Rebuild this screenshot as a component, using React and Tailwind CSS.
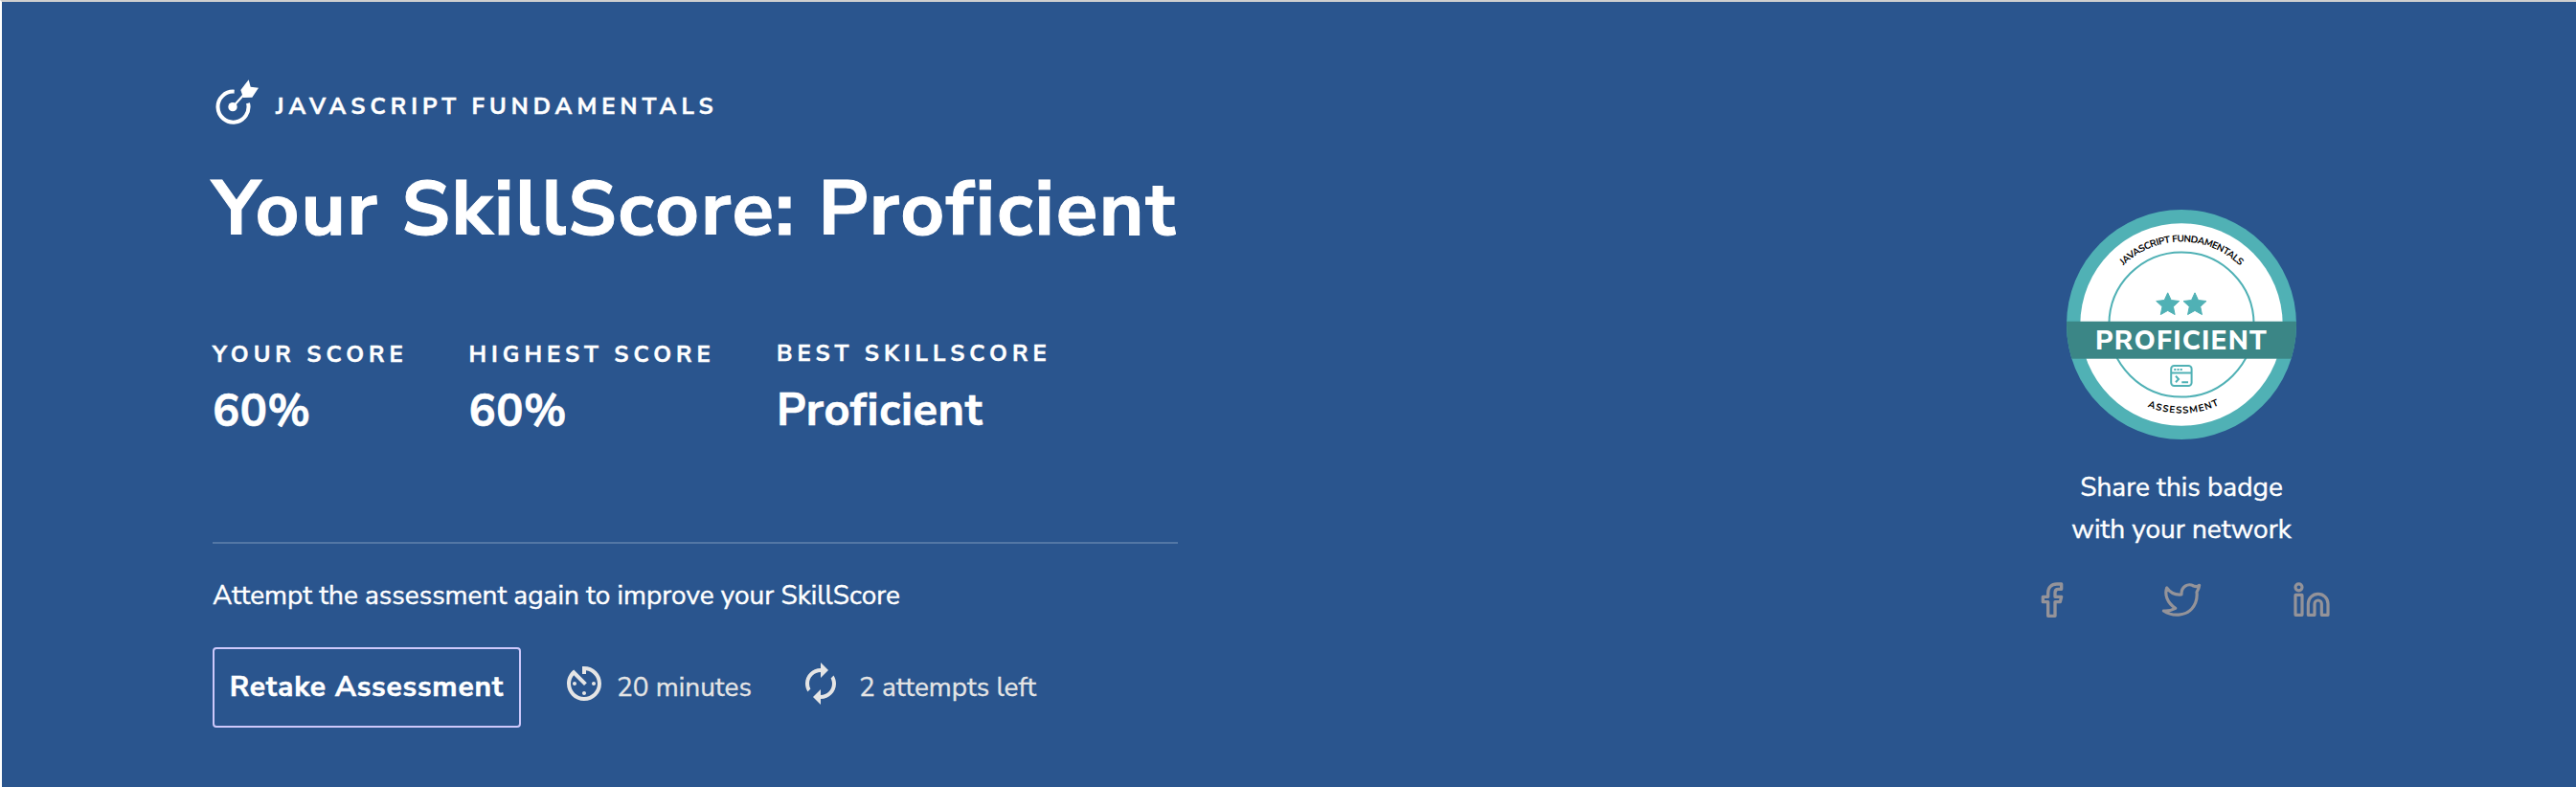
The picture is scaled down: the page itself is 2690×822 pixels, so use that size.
import React from "react";
import { MdAvTimer, MdAutorenew } from "react-icons/md";

function TargetIcon() {
  return (
    <svg className="h-12 w-12 shrink-0" viewBox="36 39 144 144" fill="none">
      <path d="M104 77A48 48 0 1 0 147 113" stroke="#fff" strokeWidth="12" />
      <circle cx="99" cy="125" r="14" fill="#fff" />
      <path d="M99 125L137 83" stroke="#fff" strokeWidth="6.5" />
      <path d="M149 40L155 62L180 65L160 95L132 96L124 72Z" fill="#fff" />
    </svg>
  );
}

function Star({ x }) {
  const pts = Array.from({ length: 10 }, (_, i) => {
    const r = i % 2 ? 6 : 12.6;
    const a = (Math.PI / 5) * i - Math.PI / 2;
    return `${(x + r * Math.cos(a)).toFixed(2)},${(99.4 + r * Math.sin(a)).toFixed(2)}`;
  }).join(" ");
  return <polygon points={pts} fill="#50b1b5" stroke="#50b1b5" strokeWidth="1" strokeLinejoin="round" />;
}

function Badge() {
  return (
    <svg className="h-60 w-60" viewBox="0 0 240 240">
      <defs>
        <clipPath id="disc"><circle cx="120" cy="120" r="120" /></clipPath>
        <path id="arcTop" d="M33.5 120A86.5 86.5 0 0 1 206.5 120" />
        <path id="arcBottom" d="M27.3 120A92.7 92.7 0 0 0 212.7 120" />
      </defs>
      <circle cx="120" cy="120" r="120" fill="#50b1b5" />
      <circle cx="120" cy="120" r="105.7" fill="#fff" />
      <circle cx="120" cy="120" r="75.6" fill="none" stroke="#50b1b5" strokeWidth="2" />
      <rect x="0" y="116.7" width="240" height="39" fill="#3b8686" clipPath="url(#disc)" />
      <Star x={105.7} />
      <Star x={134} />
      <g fill="none" stroke="#50b1b5" strokeWidth="2">
        <rect x="109.2" y="163" width="21.4" height="21" rx="3.2" />
        <path d="M109.2 170.5H130.6M120.3 180.2H127M114 173.8L117 177L114 180.2" />
        <path d="M112.3 167H120.7" strokeDasharray="2 1.2" />
      </g>
      <text x="120" y="146" textAnchor="middle" fill="#fff" className="text-[28px] font-extrabold tracking-[1.25px]">PROFICIENT</text>
      <text fill="#000" className="text-[10px] font-bold tracking-[-0.45px]"><textPath href="#arcTop" startOffset="50%" textAnchor="middle">JAVASCRIPT FUNDAMENTALS</textPath></text>
      <text fill="#000" className="text-[10px] font-bold tracking-[1.1px]"><textPath href="#arcBottom" startOffset="50.9%" textAnchor="middle">ASSESSMENT</textPath></text>
    </svg>
  );
}

function FacebookIcon() {
  return (
    <svg className="h-[50px] w-[50px]" viewBox="0 0 150 150" fill="none" stroke="#949399" strokeWidth="10" strokeLinejoin="round">
      <path d="M98 30H84C66 30 56 42 56 58V70H40V86H56V130H78V86H94L98 70H78V57C78 50 82 46 88 46H98Z" />
    </svg>
  );
}

function TwitterIcon() {
  return (
    <svg className="ml-[80px] h-[50px] w-14" viewBox="0 0 168 150" fill="none" stroke="#949399" strokeWidth="9.5" strokeLinejoin="round">
      <path d="M140 34C135 38 127 38 122 36C104 26 83 38 84 63C64 65 48 56 38 42C31 62 38 88 65 106C54 112 42 115 28 114C56 133 96 130 116 108C130 92 134 74 132 55C136 49 139 43 140 34Z" />
    </svg>
  );
}

function LinkedinIcon() {
  return (
    <svg className="ml-[82px] h-[50px] w-[50px]" viewBox="0 0 150 150" fill="none" stroke="#949399" strokeWidth="9.5" strokeLinejoin="round">
      <circle cx="37.5" cy="40" r="10.5" />
      <rect x="27" y="64" width="21" height="63" rx="1" />
      <path d="M67 127V92A31 31 0 0 1 129 92V127H109V92A11 11 0 0 0 87 92V127Z" />
    </svg>
  );
}

function Stat({ label, value, className }) {
  return (
    <div className={className}>
      <div className="text-[24px] leading-[32px] font-bold tracking-[5px] whitespace-nowrap">{label}</div>
      <div className="mt-3 h-[63px] text-[47px] leading-[64px] font-bold tracking-[0.6px] [-webkit-text-stroke:0.6px]">{value}</div>
    </div>
  );
}

export default function App() {
  return (
    <div className="flex h-[822px] w-full justify-between overflow-hidden border-t-2 border-l-2 border-t-[#cfcfcf] border-l-white bg-[#2a558e] pr-[232px] pl-[220px] font-['Nunito_Sans','Nunito','Lato',sans-serif] text-white">
      <main className="w-[1008px] pt-[81px] [-webkit-text-stroke:0.4px]">
        <div className="flex h-12 items-center">
          <TargetIcon />
          <span className="mt-2 ml-[18px] text-[24px] leading-[32px] font-bold tracking-[5px] whitespace-nowrap">JAVASCRIPT FUNDAMENTALS</span>
        </div>
        <h1 className="mt-[34px] text-[80px] leading-[108px] font-bold tracking-[1.8px] whitespace-nowrap [-webkit-text-stroke:1px]">Your SkillScore: Proficient</h1>
        <div className="mt-[81px] flex">
          <Stat label="YOUR SCORE" value="60%" className="w-[267.5px]" />
          <Stat label="HIGHEST SCORE" value="60%" className="w-[321.5px]" />
          <Stat label="BEST SKILLSCORE" value="Proficient" className="-mt-px" />
        </div>
        <div className="mt-[105px] h-0.5 bg-[#5377a5]" />
        <p className="mt-8 text-[28px] leading-[44px]">Attempt the assessment again to improve your SkillScore</p>
        <div className="mt-8 flex items-center text-[28px] leading-[44px] text-[#e5e5e5] [-webkit-text-stroke:0.3px]">
          <button className="h-[84px] w-[322px] rounded border-2 border-[#cdc8fb] pb-px text-[30px] font-bold tracking-[0.78px] whitespace-nowrap text-white [-webkit-text-stroke:0.5px]">Retake Assessment</button>
          <MdAvTimer className="-mt-2 ml-[42px] h-12 w-12" />
          <span className="ml-2.5 w-[189px]">20 minutes</span>
          <MdAutorenew className="-mt-2 h-12 w-12" />
          <span className="ml-4">2 attempts left</span>
        </div>
      </main>
      <aside className="flex w-[360px] flex-col items-center pt-[217px]">
        <Badge />
        <p className="mt-7 text-center text-[28px] leading-[44px] [-webkit-text-stroke:0.4px]">Share this badge<br />with your network</p>
        <div className="mt-[25px] ml-0.5 flex w-[318px]">
          <FacebookIcon />
          <TwitterIcon />
          <LinkedinIcon />
        </div>
      </aside>
    </div>
  );
}
